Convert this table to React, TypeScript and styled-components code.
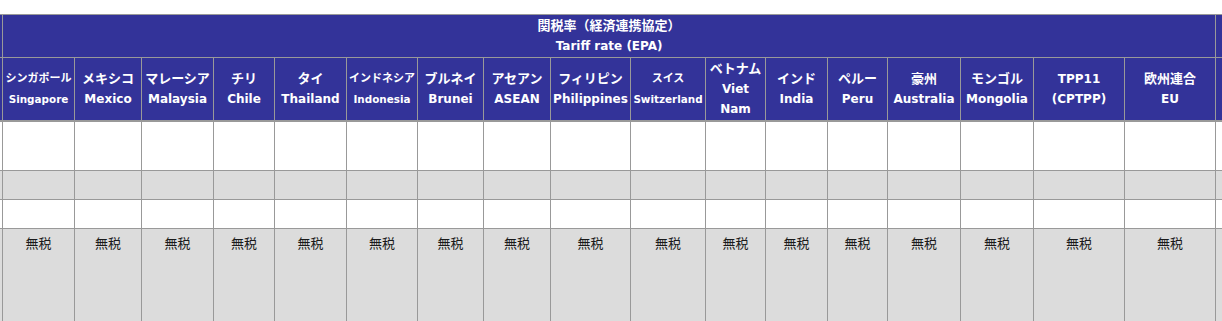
import * as React from "react";
import styled, { createGlobalStyle } from "styled-components";

const GlobalStyle = createGlobalStyle`
  html, body {
    margin: 0;
    padding: 0;
    background: #ffffff;
  }
  * {
    box-sizing: border-box;
  }
`;

const HEADER_BLUE = "#333399";
const LINE = "#999999";
const LATIN = `"DejaVu Sans", "Noto Sans CJK JP", sans-serif`;
const JAPANESE = `"DejaVu Sans", "Noto Sans CJK JP", sans-serif`;

const Wrapper = styled.div`
  width: 100%;
  overflow: hidden;
  padding-top: 14px;
`;

const Table = styled.table`
  width: 1316px;
  table-layout: fixed;
  border-collapse: separate;
  border-spacing: 0;
  border-top: 1px solid ${LINE};
`;

const Col = styled.col<{ $w: number }>`
  width: ${(p) => p.$w}px;
`;

const Row = styled.tr<{ $h: number; $shade?: boolean }>`
  height: ${(p) => p.$h}px;
  background: ${(p) => (p.$shade ? "#dcdcdc" : "#ffffff")};
`;

const HeadCell = styled.th<{ $thick?: boolean }>`
  background: ${HEADER_BLUE};
  color: #ffffff;
  font-family: ${LATIN};
  font-weight: bold;
  text-align: center;
  vertical-align: middle;
  padding: 0 1px;
  border-right: 1px solid ${LINE};
  border-bottom: ${(p) => (p.$thick ? 2 : 1)}px solid ${LINE};
  white-space: nowrap;
  overflow: hidden;
`;

const Line = styled.div<{ $size: number; $ja?: boolean }>`
  font-family: ${(p) => (p.$ja ? JAPANESE : LATIN)};
  font-size: ${(p) => p.$size}px;
  line-height: 20px;
`;

const Cell = styled.td`
  border-right: 1px solid ${LINE};
  border-bottom: 1px solid ${LINE};
  padding: 4px 1px 0;
  vertical-align: top;
  text-align: center;
  font-family: "Noto Sans CJK JP", sans-serif;
  font-size: 13px;
  line-height: 20px;
  color: #1a1a1a;
`;

type Country = {
  ja: string;
  en: string[];
  w: number;
  small?: boolean;
  latinTop?: boolean;
};

const countries: Country[] = [
  { ja: "シンガポール", en: ["Singapore"], w: 72, small: true },
  { ja: "メキシコ", en: ["Mexico"], w: 67 },
  { ja: "マレーシア", en: ["Malaysia"], w: 72 },
  { ja: "チリ", en: ["Chile"], w: 61 },
  { ja: "タイ", en: ["Thailand"], w: 72 },
  { ja: "インドネシア", en: ["Indonesia"], w: 71, small: true },
  { ja: "ブルネイ", en: ["Brunei"], w: 66 },
  { ja: "アセアン", en: ["ASEAN"], w: 67 },
  { ja: "フィリピン", en: ["Philippines"], w: 80 },
  { ja: "スイス", en: ["Switzerland"], w: 75, small: true },
  { ja: "ベトナム", en: ["Viet", "Nam"], w: 60 },
  { ja: "インド", en: ["India"], w: 62 },
  { ja: "ペルー", en: ["Peru"], w: 60 },
  { ja: "豪州", en: ["Australia"], w: 73 },
  { ja: "モンゴル", en: ["Mongolia"], w: 73 },
  { ja: "TPP11", en: ["(CPTPP)"], w: 91, latinTop: true },
  { ja: "欧州連合", en: ["EU"], w: 91 },
];

const bodyRows = [
  { h: 49, shade: false, text: "" },
  { h: 29, shade: true, text: "" },
  { h: 29, shade: false, text: "" },
  { h: 100, shade: true, text: "無税" },
];

const App: React.FC = () => {
  return (
    <React.Fragment>
      <GlobalStyle />
      <Wrapper>
        <Table>
          <colgroup>
            <Col $w={3} />
            {countries.map((c) => (
              <Col key={c.en.join()} $w={c.w} />
            ))}
            <Col $w={100} />
          </colgroup>
          <thead>
            <Row $h={43}>
              <HeadCell />
              <HeadCell colSpan={countries.length}>
                <Line $size={13} $ja>
                  関税率（経済連携協定）
                </Line>
                <Line $size={12}>Tariff rate (EPA)</Line>
              </HeadCell>
              <HeadCell />
            </Row>
            <Row $h={64}>
              <HeadCell $thick />
              {countries.map((c) => (
                <HeadCell key={c.en.join()} $thick>
                  <Line $size={c.latinTop ? 12 : c.small ? 11 : 13} $ja={!c.latinTop}>
                    {c.ja}
                  </Line>
                  {c.en.map((e) => (
                    <Line key={e} $size={c.small ? 10.4 : 12}>
                      {e}
                    </Line>
                  ))}
                </HeadCell>
              ))}
              <HeadCell $thick />
            </Row>
          </thead>
          <tbody>
            {bodyRows.map((r, i) => (
              <Row key={i} $h={r.h} $shade={r.shade}>
                <Cell />
                {countries.map((c) => (
                  <Cell key={c.en.join()}>{r.text}</Cell>
                ))}
                <Cell />
              </Row>
            ))}
          </tbody>
        </Table>
      </Wrapper>
    </React.Fragment>
  );
};

export default App;
